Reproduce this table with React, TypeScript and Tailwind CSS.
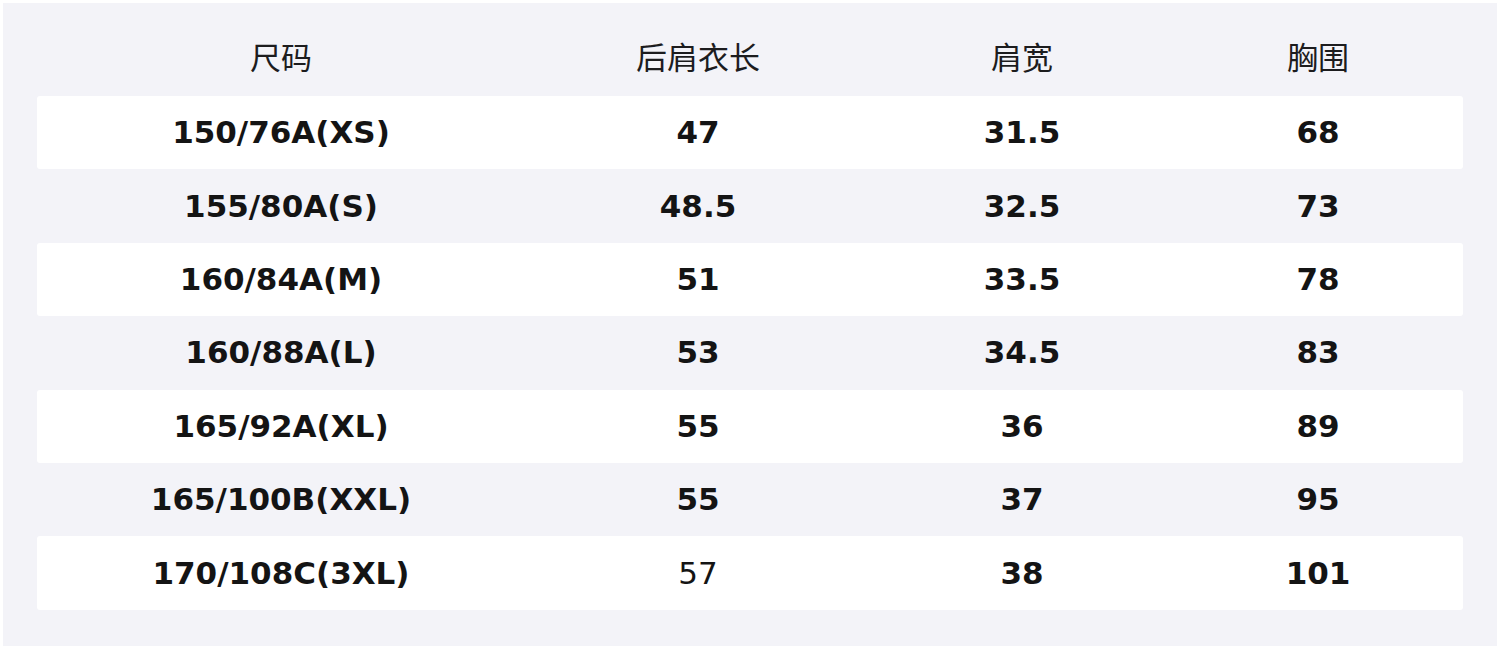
const headers = ["尺码", "后肩衣长", "肩宽", "胸围"];

const rows: { cells: string[]; light?: number }[] = [
  { cells: ["150/76A(XS)", "47", "31.5", "68"] },
  { cells: ["155/80A(S)", "48.5", "32.5", "73"] },
  { cells: ["160/84A(M)", "51", "33.5", "78"] },
  { cells: ["160/88A(L)", "53", "34.5", "83"] },
  { cells: ["165/92A(XL)", "55", "36", "89"] },
  { cells: ["165/100B(XXL)", "55", "37", "95"] },
  { cells: ["170/108C(3XL)", "57", "38", "101"], light: 1 },
];

const cols = "grid grid-cols-[488px_346px_302px_290px]";

export default function App() {
  return (
    <div className="h-[649px] w-[1500px] bg-white p-[3px]">
      <div className="h-[643px] w-[1494px] bg-[#f3f3f8] px-[34px]">
        <div className={`${cols} h-[93px] items-center pt-[12px]`}>
          {headers.map((h) => (
            <div
              key={h}
              className="text-center font-['Noto_Sans_CJK_SC',sans-serif] text-[31px] leading-none text-[#1c1c1e]"
            >
              {h}
            </div>
          ))}
        </div>
        {rows.map((r, i) => (
          <div
            key={i}
            className={`${cols} h-[73.4px] items-center rounded-[3px] ${i % 2 === 0 ? "bg-white" : ""}`}
          >
            {r.cells.map((c, j) => (
              <div
                key={j}
                className={`text-center font-['DejaVu_Sans',sans-serif] text-[31px] leading-none text-[#141414] ${
                  r.light === j ? "font-normal" : "font-bold"
                }`}
              >
                {c}
              </div>
            ))}
          </div>
        ))}
      </div>
    </div>
  );
}
